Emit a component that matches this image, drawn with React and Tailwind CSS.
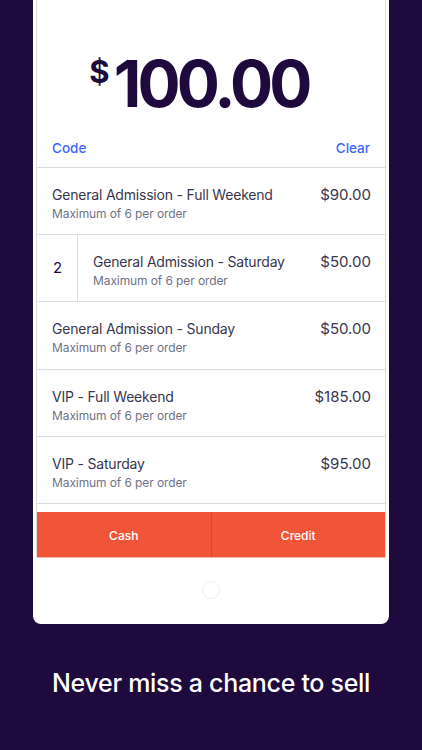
const tickets = [
	{ name: "General Admission - Full Weekend", price: "$90.00" },
	{ name: "General Admission - Saturday", price: "$50.00", qty: 2 },
	{ name: "General Admission - Sunday", price: "$50.00" },
	{ name: "VIP - Full Weekend", price: "$185.00" },
	{ name: "VIP - Saturday", price: "$95.00" },
];

function TicketRow({ ticket }) {
	return (
		<div className="flex h-[67.2px] border-b border-[#dcdbe3]">
			{ticket.qty && (
				<div className="w-[41px] flex items-center justify-center border-r border-[#dcdbe3] text-[15px] text-[#1e0a3c] pl-[1px]">
					{ticket.qty}
				</div>
			)}
			<div className="flex-1 flex justify-between pl-[15px] pr-[14px] pt-[17px]">
				<div className="flex flex-col">
					<span className="text-[14px] leading-[20px] tracking-[-0.2px] text-[#39364f]">
						{ticket.name}
					</span>
					<span className="text-[12px] leading-[18px] tracking-[-0.1px] text-[#6f7287]">
						Maximum of 6 per order
					</span>
				</div>
				<span className="text-[15px] leading-[20px] text-[#39364f]">
					{ticket.price}
				</span>
			</div>
		</div>
	);
}

export default function App() {
	return (
		<div
			className="w-[422px] h-[750px] bg-[#1e0a3c] flex flex-col items-center overflow-hidden"
			style={{ fontFamily: "Inter, 'Noto Sans', sans-serif" }}
		>
			<div className="w-[356px] h-[624px] bg-white rounded-b-[8px] flex flex-col px-[3px] shrink-0">
				<div className="border-x border-[#dcdbe3] flex flex-col">
					<div className="h-[127px] flex items-start justify-center pt-[52px] pr-[24px]">
						<span className="text-[31px] font-bold text-[#1e0a3c] leading-none mt-[4px] mr-[4px]">
							$
						</span>
						<span className="text-[64px] font-bold text-[#1e0a3c] leading-none tracking-[-3.8px]">
							100.00
						</span>
					</div>
					<div className="h-[41px] flex items-center justify-between px-[15px] pt-[3px] border-b border-[#dcdbe3] text-[13.5px] font-medium text-[#3d64ff]">
						<span>Code</span>
						<span>Clear</span>
					</div>
					{tickets.map((t) => (
						<TicketRow key={t.name} ticket={t} />
					))}
					<div className="h-[8px]" />
					<div className="flex h-[46px] bg-[#f05537] border-b border-[#f3b9ae]">
						<div className="flex-1 flex items-center justify-center pt-[3px] text-white text-[12px] font-medium border-r border-[#d9462b]">
							Cash
						</div>
						<div className="flex-1 flex items-center justify-center pt-[3px] text-white text-[12px] font-medium">
							Credit
						</div>
					</div>
				</div>
				<div className="flex-1 flex items-center justify-center pb-[2px]">
					<div className="w-[18px] h-[18px] rounded-full border border-[#eeedf2]" />
				</div>
			</div>
			<div className="flex-1 flex items-center justify-center pb-[6px]">
				<span className="text-white text-[25px] font-medium tracking-[-0.3px]">
					Never miss a chance to sell
				</span>
			</div>
		</div>
	);
}
